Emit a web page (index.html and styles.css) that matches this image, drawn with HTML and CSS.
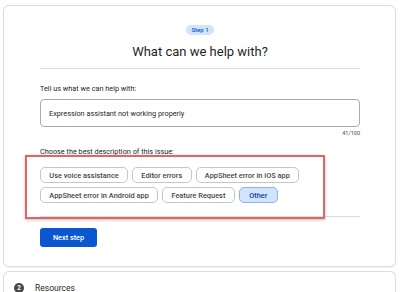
FILE: index.html
```html
<!DOCTYPE html>
<html lang="en">
<head>
  <meta charset="UTF-8">
  <title>What can we help with?</title>
  <link rel="stylesheet" href="styles.css">
</head>
<body>
  <section class="card step-card">
    <div class="step-badge">Step 1</div>
    <h1 class="step-title">What can we help with?</h1>
    <hr class="rule">
    <label class="field-label" for="issue">Tell us what we can help with:</label>
    <div class="text-field" id="issue">Expression assistant not working properly</div>
    <div class="counter">41/100</div>
    <p class="field-label choose">Choose the best description of this issue:</p>
    <div class="chips">
      <div class="highlight"></div>
      <div class="chip-row">
        <span class="chip">Use voice assistance</span>
        <span class="chip">Editor errors</span>
        <span class="chip">AppSheet error in iOS app</span>
      </div>
      <div class="chip-row">
        <span class="chip">AppSheet error in Android app</span>
        <span class="chip">Feature Request</span>
        <span class="chip selected">Other</span>
      </div>
    </div>
    <hr class="rule rule-bottom">
    <button class="next-btn">Next step</button>
  </section>
  <section class="card resources-card">
    <span class="step-num">2</span>
    <span class="resources-title">Resources</span>
  </section>
</body>
</html>
```
FILE: styles.css
```css
/* Support form - step 1 */
:root {
  --border: #dadce0;
  --text: #1f1f1f;
  --muted: #444746;
  --blue: #0b57d0;
  --blue-soft: #d3e3fd;
}

html, body {
  margin: 0;
  background: #fff;
  font-family: Roboto, "Noto Sans", Arial, sans-serif;
  color: var(--text);
}

body {
  padding: 5px 4px 0 3px;
  height: 287px;
  overflow: hidden;
}

.card {
  border: 1px solid var(--border);
  border-radius: 6px;
  background: #fff;
  box-shadow: 0 1px 1px rgba(60, 64, 67, 0.08);
}

.step-card {
  display: flex;
  flex-direction: column;
  padding: 19px 35px 19px 36px;
}

.step-badge {
  align-self: center;
  height: 10px;
  line-height: 10px;
  padding: 0 5px;
  border-radius: 5px;
  background: var(--blue-soft);
  color: var(--blue);
  font-size: 6px;
  font-weight: 500;
}

.step-title {
  margin: 9px 0 0;
  text-align: center;
  font-size: 13px;
  line-height: 16px;
  font-weight: 400;
  color: var(--text);
}

.rule {
  margin: 8px 0 0;
  border: 0;
  border-top: 1px solid var(--border);
}

.field-label {
  display: block;
  margin: 15px 0 0;
  font-size: 7.3px;
  line-height: 10px;
  color: var(--text);
}

.text-field {
  margin-top: 5px;
  height: 28px;
  box-sizing: border-box;
  border: 1px solid #a8abae;
  border-radius: 4px;
  padding: 0 8px;
  display: flex;
  align-items: center;
  font-size: 7.3px;
  color: var(--text);
}

.counter {
  margin-top: 2px;
  text-align: right;
  font-size: 5.5px;
  line-height: 8px;
  color: var(--muted);
}

.choose {
  margin-top: 10px;
}

.chips {
  position: relative;
  margin-top: 10px;
  display: flex;
  flex-direction: column;
  gap: 4px;
}

.chip-row {
  display: flex;
  gap: 4px;
}

.chip {
  height: 16px;
  box-sizing: border-box;
  padding: 0 8.3px;
  border: 1px solid #c4c7c5;
  border-radius: 5px;
  display: flex;
  align-items: center;
  font-size: 7.4px;
  font-weight: 500;
  color: var(--muted);
  background: #fff;
}

.chip.selected {
  background: var(--blue-soft);
  border-color: #8fb0e8;
  color: #0842a0;
  padding: 0 9.5px;
}

/* annotation box drawn over the chips */
.highlight {
  position: absolute;
  left: -15px;
  top: -12px;
  width: 300px;
  height: 64px;
  box-sizing: border-box;
  border: 2px solid #e06666;
  box-shadow: 0 1px 3px rgba(0, 0, 0, 0.25);
  pointer-events: none;
}

.rule-bottom {
  margin-top: 13px;
}

.next-btn {
  align-self: flex-start;
  margin-top: 11px;
  width: 57px;
  height: 19px;
  border: 0;
  border-radius: 3px;
  background: var(--blue);
  color: #fff;
  font-family: inherit;
  font-size: 7.3px;
  font-weight: 500;
  padding: 0;
}

.resources-card {
  margin-top: 4px;
  height: 20px;
  display: flex;
  align-items: flex-start;
  gap: 11px;
  padding: 11px 0 0 10px;
  border-bottom: 0;
  border-radius: 6px 6px 0 0;
}

.step-num {
  width: 10px;
  height: 10px;
  border-radius: 50%;
  background: #444746;
  color: #fff;
  font-size: 6.5px;
  font-weight: 700;
  line-height: 10px;
  text-align: center;
}

.resources-title {
  font-size: 8.5px;
  line-height: 10px;
  color: var(--text);
}
```
